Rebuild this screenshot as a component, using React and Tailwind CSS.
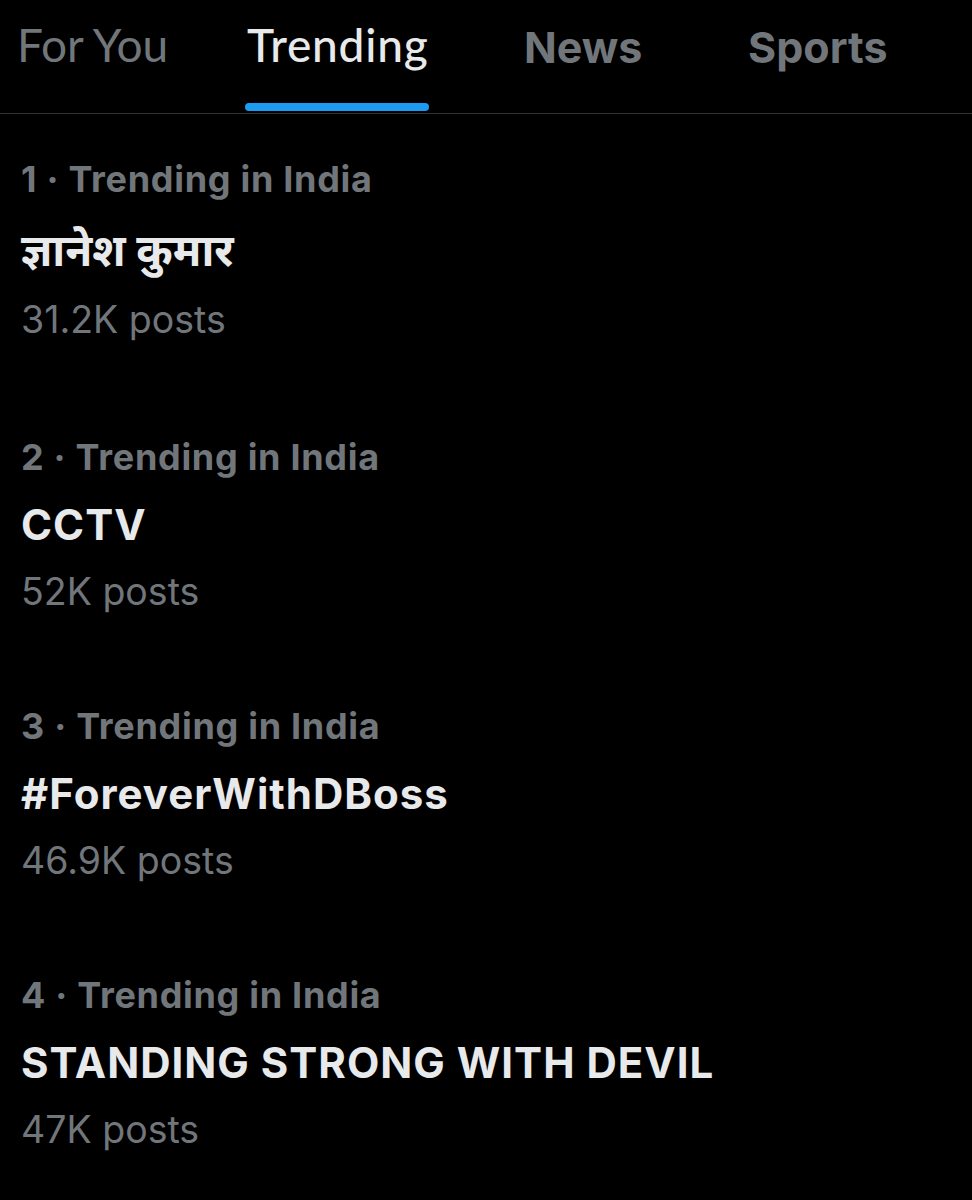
import React from "react";

const items = [
  { n: 1, title: "ज्ञानेश कुमार", posts: "31.2K posts", hindi: true },
  { n: 2, title: "CCTV", posts: "52K posts" },
  { n: 3, title: "#ForeverWithDBoss", posts: "46.9K posts" },
  { n: 4, title: "STANDING STRONG WITH DEVIL", posts: "47K posts" },
];

const chirp = { fontFamily: "Inter, 'Noto Sans', 'Noto Sans Devanagari', 'Lohit Devanagari', sans-serif" };

export default function App() {
  return (
    <div className="w-[972px] h-[1200px] bg-black overflow-hidden">
      <div className="h-[114px] border-b border-[#2f3336] flex items-start pt-[23px] pl-[17px]">
        <div className="w-[230px] shrink-0">
          <span className="block text-[46px] leading-[44px] text-[#71767b] [font-family:Lato,sans-serif]">For You</span>
        </div>
        <div className="w-[277px] shrink-0">
          <div className="inline-flex flex-col">
            <span className="block text-[46px] leading-[44px] tracking-[0.8px] text-[#e7e9ea] font-medium [font-family:Lato,sans-serif]">Trending</span>
            <div className="mt-[36px] -ml-[2px] h-[8px] rounded-full bg-[#1d9bf0]" />
          </div>
        </div>
        <div className="w-[224px] shrink-0 pt-[2px]">
          <span className="block text-[43px] leading-[44px] text-[#71767b] font-bold" style={chirp}>News</span>
        </div>
        <div className="shrink-0 pt-[2px]">
          <span className="block text-[43px] leading-[44px] text-[#71767b] font-bold" style={chirp}>Sports</span>
        </div>
      </div>
      <div className="pl-[21px]" style={chirp}>
        {items.map((it) => (
          <div key={it.n} className={it.hindi ? "pt-[45px] pb-[50px]" : "pt-[45px] pb-[47px]"}>
            <div className="text-[36px] leading-[40px] tracking-[0.7px] font-bold text-[#71767b] whitespace-nowrap">
              {it.n} · Trending in India
            </div>
            <div
              className={
                "mt-[24px] font-bold text-[#e7e9ea] whitespace-nowrap " +
                (it.hindi ? "text-[44px] leading-[54px]" : "text-[42px] leading-[48px] tracking-[1px]")
              }
            >
              {it.title}
            </div>
            <div className="mt-[21px] text-[37.5px] leading-[44px] text-[#71767b] whitespace-nowrap">
              {it.posts}
            </div>
          </div>
        ))}
      </div>
    </div>
  );
}
